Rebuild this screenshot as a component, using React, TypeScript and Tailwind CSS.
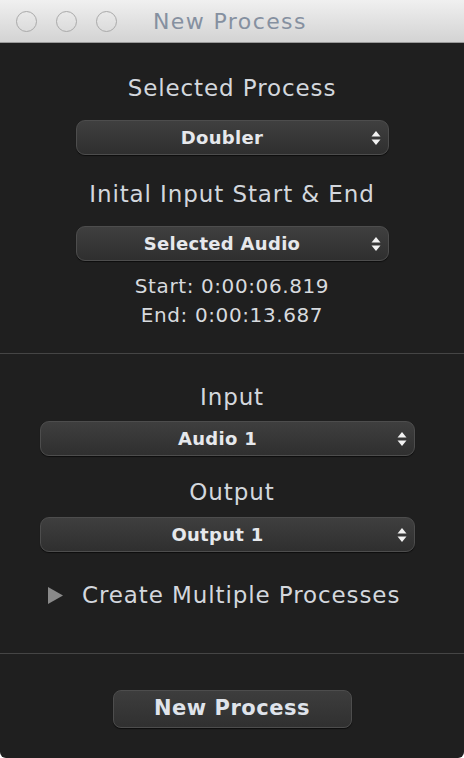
import React from 'react';

const font = { fontFamily: '"DejaVu Sans", "Noto Sans", sans-serif' };

function UpDown() {
  return (
    <svg width="10" height="15" viewBox="0 0 10 15" className="flex-shrink-0">
      <path d="M5 0.5 L9.5 6 L0.5 6 Z" fill="#f2f2f2" />
      <path d="M5 14.5 L9.5 9 L0.5 9 Z" fill="#f2f2f2" />
    </svg>
  );
}

function Popup({ label, wide }: { label: string; wide?: boolean }) {
  return (
    <div
      className={`relative flex h-[35px] items-center justify-center rounded-[9px] border border-[#4d4d4d] bg-gradient-to-b from-[#3f3f3f] to-[#2f2f2f] pr-[20px] shadow-[0_1px_1px_rgba(0,0,0,0.6)] ${wide ? 'w-[375px]' : 'w-[313px]'}`}
    >
      <span className="text-[18px] font-bold tracking-[0.3px] text-[#e6e8ec]">{label}</span>
      <span className="absolute right-[7px] top-1/2 -translate-y-1/2">
        <UpDown />
      </span>
    </div>
  );
}

function Light() {
  return <div className="h-[21px] w-[21px] rounded-full border-[1.5px] border-[#a9a9a9] bg-gradient-to-b from-[#e9e9e9] to-[#dcdcdc]" />;
}

const label = 'h-[26px] text-[23px] leading-[26px] tracking-[0.9px] text-[#d3d7dd]';

export default function App() {
  return (
    <div className="h-[758px] w-[464px] bg-white" style={font}>
      <div className="flex h-full flex-col overflow-hidden rounded-b-[6px] bg-[#1f1f1f]">
        <div className="relative flex h-[43px] flex-shrink-0 items-center border-b border-[#9a9a9a] bg-gradient-to-b from-[#f0f0f0] to-[#d3d3d3]">
          <div className="ml-[16px] flex gap-[19px]">
            <Light />
            <Light />
            <Light />
          </div>
          <span className="ml-[36px] text-[22px] tracking-[1.4px] text-[#8590a0]">New Process</span>
        </div>

        <div className="flex flex-col items-center pt-[32px]">
          <div className={label}>Selected Process</div>
          <div className="mt-[19px]">
            <Popup label="Doubler" />
          </div>
          <div className={`mt-[26px] ${label}`}>Inital Input Start &amp; End</div>
          <div className="mt-[19px]">
            <Popup label="Selected Audio" />
          </div>
          <div className="mt-[11px] text-[20px] leading-[29px] tracking-[0.6px] text-[#d7dade]">
            <div className="text-center">Start: 0:00:06.819</div>
            <div className="text-center">End: 0:00:13.687</div>
          </div>
        </div>

        <div className="mt-[23px] h-px bg-[#454545]" />

        <div className="flex flex-col pt-[30px]">
          <div className={`self-center ${label}`}>Input</div>
          <div className="ml-[40px] mt-[11px]">
            <Popup label="Audio 1" wide />
          </div>
          <div className={`mt-[23px] self-center ${label}`}>Output</div>
          <div className="ml-[40px] mt-[12px]">
            <Popup label="Output 1" wide />
          </div>
        </div>

        <div className="mt-[30px] flex items-center pl-[48px]">
          <svg width="15" height="17" viewBox="0 0 15 17" className="flex-shrink-0">
            <path d="M0 0 L15 8.5 L0 17 Z" fill="#8a8a8a" />
          </svg>
          <span className={`ml-[19px] ${label}`}>Create Multiple Processes</span>
        </div>

        <div className="mt-[45px] h-px bg-[#454545]" />

        <div className="mt-[36px] flex justify-center">
          <div className="flex h-[38px] w-[239px] items-center justify-center rounded-[8px] border border-[#4d4d4d] bg-gradient-to-b from-[#3d3d3d] to-[#303030] shadow-[0_1px_1px_rgba(0,0,0,0.6)]">
            <span className="text-[21px] font-bold tracking-[0.5px] text-[#dfe3ea]">New Process</span>
          </div>
        </div>
      </div>
    </div>
  );
}
